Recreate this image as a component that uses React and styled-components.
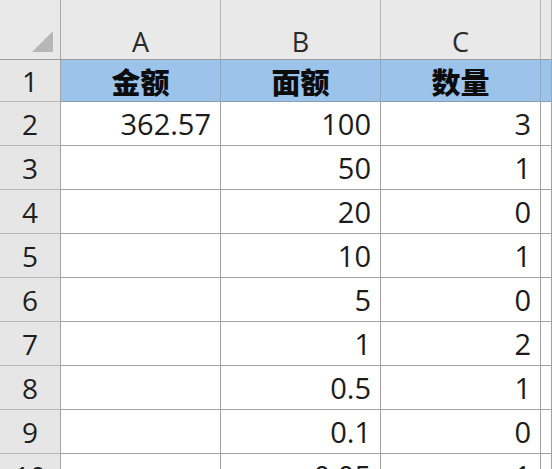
import styled, { createGlobalStyle } from "styled-components";

const GlobalStyle = createGlobalStyle`
  html, body {
    margin: 0;
    padding: 0;
    background: #ffffff;
    overflow: hidden;
  }
  * {
    box-sizing: border-box;
  }
`;

const Sheet = styled.div`
  display: grid;
  grid-template-columns: 61px 160px 160px 160px 1fr;
  grid-template-rows: 60px 42px repeat(9, 44px);
  width: 552px;
  height: 469px;
  overflow: hidden;
  font-family: "Open Sans", "Noto Sans", "Noto Sans CJK SC", sans-serif;
  color: #1b1b1b;
`;

const Corner = styled.div`
  position: relative;
  background: #e9e9e9;
  border-right: 1px solid #a9a9a9;
  border-bottom: 1px solid #9c9c9c;
`;

const CornerMark = styled.div`
  position: absolute;
  right: 7px;
  bottom: 7px;
  width: 0;
  height: 0;
  border-left: 21px solid transparent;
  border-bottom: 21px solid #b7b7b7;
`;

const ColHead = styled.div`
  display: flex;
  align-items: flex-end;
  justify-content: center;
  padding-bottom: 4px;
  line-height: 1;
  background: #e9e9e9;
  border-right: 1px solid #b4b4b4;
  border-bottom: 1px solid #9c9c9c;
  font-size: 27px;
  color: #2b2b2b;
`;

const RowHead = styled.div`
  display: flex;
  align-items: center;
  justify-content: center;
  background: #e6e6e6;
  border-right: 1px solid #a3a3a3;
  border-bottom: 1px solid #b8b8b8;
  font-size: 28px;
  color: #1e1e1e;
`;

const Cell = styled.div`
  display: flex;
  align-items: center;
  justify-content: ${(p) => (p.$head ? "center" : "flex-end")};
  padding-right: ${(p) => (p.$head ? "0" : "9px")};
  background: ${(p) => (p.$head ? "#9cc3e9" : "#ffffff")};
  border-right: 1px solid ${(p) => (p.$head ? "#8fa9c4" : "#a0a0a0")};
  border-bottom: 1px solid ${(p) => (p.$head ? "#8a9db2" : "#a3a3a3")};
  font-size: 29px;
  font-weight: ${(p) => (p.$head ? 900 : 400)};
  font-family: ${(p) =>
    p.$head
      ? `"Noto Sans CJK SC", "Noto Sans", sans-serif`
      : `"Open Sans", "Noto Sans", sans-serif`};
  color: ${(p) => (p.$head ? "#0c0c0c" : "#1b1b1b")};
  white-space: nowrap;
  overflow: hidden;
`;

const columns = ["A", "B", "C", ""];

const rows = [
  ["362.57", "100", "3"],
  ["", "50", "1"],
  ["", "20", "0"],
  ["", "10", "1"],
  ["", "5", "0"],
  ["", "1", "2"],
  ["", "0.5", "1"],
  ["", "0.1", "0"],
  ["", "0.05", "1"],
];

const Row = ({ num, values }) => (
  <>
    <RowHead>{num}</RowHead>
    {values.map((v, j) => (
      <Cell key={j}>{v}</Cell>
    ))}
    <Cell />
  </>
);

const App = () => {
  return (
    <>
      <GlobalStyle />
      <Sheet>
        <Corner>
          <CornerMark />
        </Corner>
        {columns.map((c, i) => (
          <ColHead key={i}>{c}</ColHead>
        ))}

        <RowHead>1</RowHead>
        <Cell $head>金额</Cell>
        <Cell $head>面额</Cell>
        <Cell $head>数量</Cell>
        <Cell $head />

        {rows.map((r, i) => (
          <Row key={i} num={i + 2} values={r} />
        ))}
      </Sheet>
    </>
  );
};

export default App;
